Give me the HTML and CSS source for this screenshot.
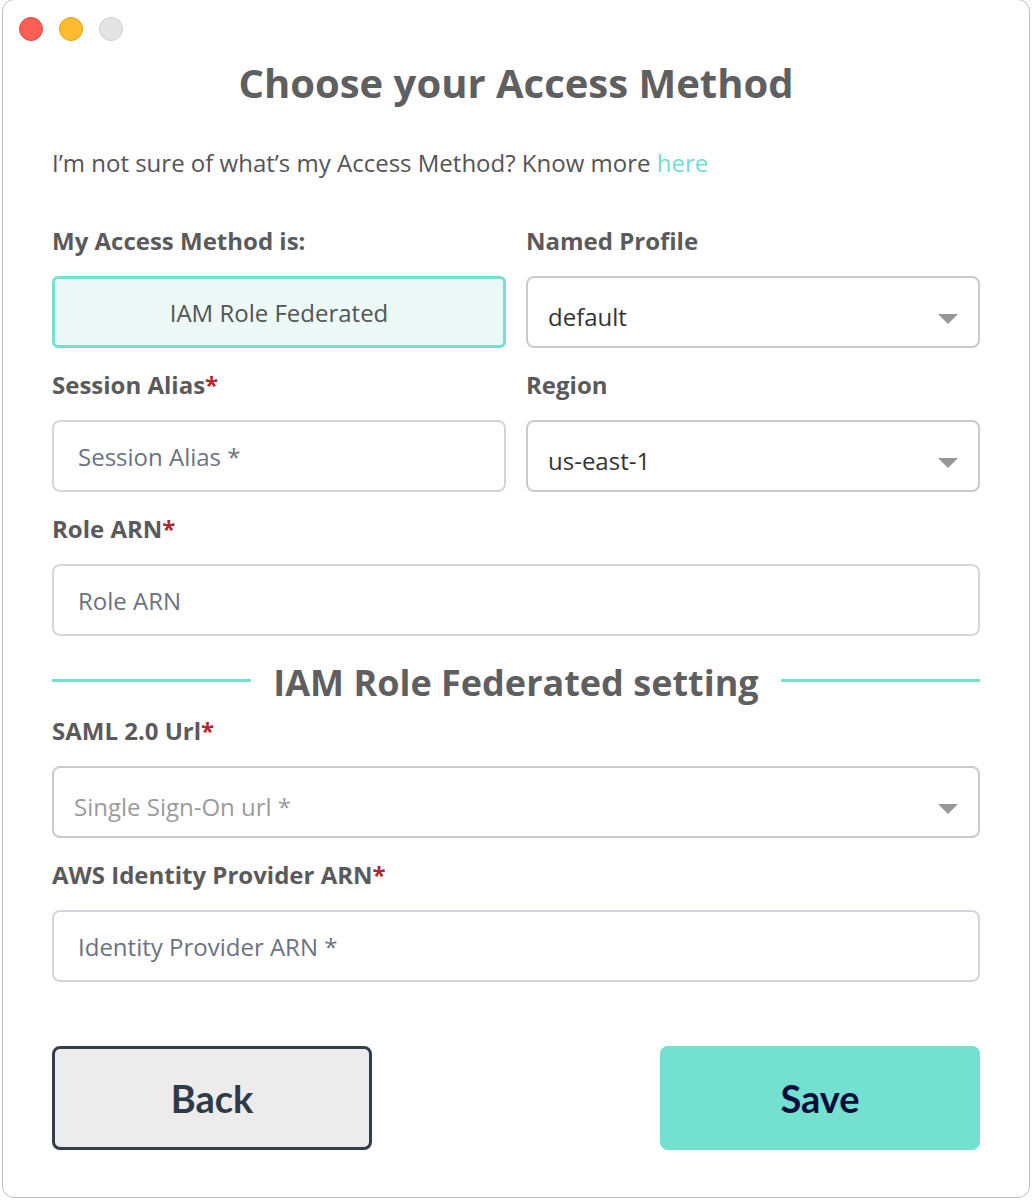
FILE: index.html
```html
<!DOCTYPE html>
<html lang="en">
<head>
<meta charset="utf-8">
<title>Choose your Access Method</title>
<link rel="stylesheet" href="styles.css">
</head>
<body>
<div class="window">
  <div class="lights">
    <span class="light red"></span>
    <span class="light yellow"></span>
    <span class="light grey"></span>
  </div>
  <h1 class="title">Choose your Access Method</h1>
  <p class="intro">I’m not sure of what’s my Access Method? Know more <a class="link" href="#">here</a></p>

  <div class="grid">
    <div class="field">
      <div class="label">My Access Method is:</div>
      <div class="method">IAM Role Federated</div>
    </div>
    <div class="field">
      <div class="label">Named Profile</div>
      <div class="select"><span class="value">default</span><span class="caret"></span></div>
    </div>
    <div class="field">
      <div class="label">Session Alias<span class="req">*</span></div>
      <div class="input"><span class="ph">Session Alias *</span></div>
    </div>
    <div class="field">
      <div class="label">Region</div>
      <div class="select"><span class="value">us-east-1</span><span class="caret"></span></div>
    </div>
    <div class="field wide">
      <div class="label">Role ARN<span class="req">*</span></div>
      <div class="input"><span class="ph">Role ARN</span></div>
    </div>
  </div>

  <div class="divider">
    <span class="rule"></span>
    <span class="divtext">IAM Role Federated setting</span>
    <span class="rule"></span>
  </div>

  <div class="stack">
    <div class="field">
      <div class="label">SAML 2.0 Url<span class="req">*</span></div>
      <div class="select sel-ph"><span class="ph2">Single Sign-On url *</span><span class="caret"></span></div>
    </div>
    <div class="field">
      <div class="label">AWS Identity Provider ARN<span class="req">*</span></div>
      <div class="input"><span class="ph">Identity Provider ARN *</span></div>
    </div>
  </div>

  <div class="buttons">
    <button class="btn back">Back</button>
    <button class="btn save">Save</button>
  </div>
</div>
</body>
</html>
```

FILE: styles.css
```css
html, body {
  margin: 0;
  padding: 0;
  background: #ffffff;
}
body {
  font-family: "Open Sans", "Liberation Sans", sans-serif;
  width: 1032px;
  height: 1200px;
  overflow: hidden;
}
.window {
  margin: -1px 0 0 2px;
  width: 1028px;
  height: 1199px;
  border: 1px solid #bdbdbd;
  border-radius: 12px;
  background: #fff;
  padding: 16px 49px 0 49px;
  box-sizing: border-box;
  display: flex;
  flex-direction: column;
}
.lights {
  display: flex;
  gap: 16px;
  margin-left: -33px;
  height: 24px;
  margin-top: 1px;
}
.light {
  width: 24px;
  height: 24px;
  border-radius: 50%;
  box-sizing: border-box;
}
.red { background: #ff5f57; border: 1px solid #e2463f; }
.yellow { background: #febc2e; border: 1px solid #e1a116; }
.grey { background: #e4e4e4; border: 1px solid #cfcfcf; }
.title {
  margin: 18px 0 0;
  text-align: center;
  font-size: 40px;
  line-height: 48px;
  font-weight: 700;
  color: #5f5f5f;
}
.intro {
  margin: 41px 0 0;
  font-size: 24px;
  line-height: 30px;
  color: #545454;
}
.link {
  color: #6fded0;
  text-decoration: none;
}
.grid {
  margin-top: 48px;
  display: grid;
  grid-template-columns: 1fr 1fr;
  column-gap: 20px;
  row-gap: 22px;
}
.wide { grid-column: 1 / 3; }
.field {
  display: flex;
  flex-direction: column;
}
.label {
  font-size: 24px;
  line-height: 30px;
  font-weight: 700;
  color: #5a5a5a;
  margin-bottom: 20px;
}
.req { color: #b3262d; }
.method {
  height: 72px;
  box-sizing: border-box;
  border: 3px solid #74e0cf;
  border-radius: 6px;
  background: #ecf9f6;
  display: flex;
  align-items: center;
  justify-content: center;
  font-size: 24px;
  color: #545454;
}
.select, .input {
  height: 72px;
  box-sizing: border-box;
  border-radius: 8px;
  display: flex;
  align-items: center;
  font-size: 24px;
}
.select {
  border: 2px solid #cacaca;
  padding: 8px 20px 0 20px;
  justify-content: space-between;
}
.sel-ph { padding-left: 20px; }
.value { color: #333; }
.ph2 { color: #9b9b9b; }
.caret {
  width: 0;
  height: 0;
  border-left: 10px solid transparent;
  border-right: 10px solid transparent;
  border-top: 10px solid #989898;
  margin-top: 6px;
}
.input {
  border: 2px solid #d2d6dc;
  padding: 0 24px;
}
.ph { color: #6b7280; }
.divider {
  margin-top: 25px;
  height: 44px;
  display: flex;
  align-items: center;
  gap: 22px;
  margin-bottom: 11px;
}
.rule {
  flex: 1;
  height: 3px;
  background: #74e0cf;
  margin-top: -5px;
}
.divtext {
  font-size: 36px;
  line-height: 44px;
  font-weight: 700;
  color: #5f5f5f;
}
.stack {
  display: flex;
  flex-direction: column;
  gap: 22px;
}
.buttons {
  margin-top: 64px;
  display: flex;
  justify-content: space-between;
}
.btn {
  width: 320px;
  height: 104px;
  border-radius: 8px;
  font-family: Lato, "Liberation Sans", sans-serif;
  font-weight: 700;
  font-size: 38px;
  box-sizing: border-box;
  cursor: pointer;
}
.back {
  background: #ececec;
  border: 3px solid #343e4a;
  color: #2f3a47;
}
.save {
  background: #74e0cf;
  border: none;
  color: #0c0b3e;
}
```
